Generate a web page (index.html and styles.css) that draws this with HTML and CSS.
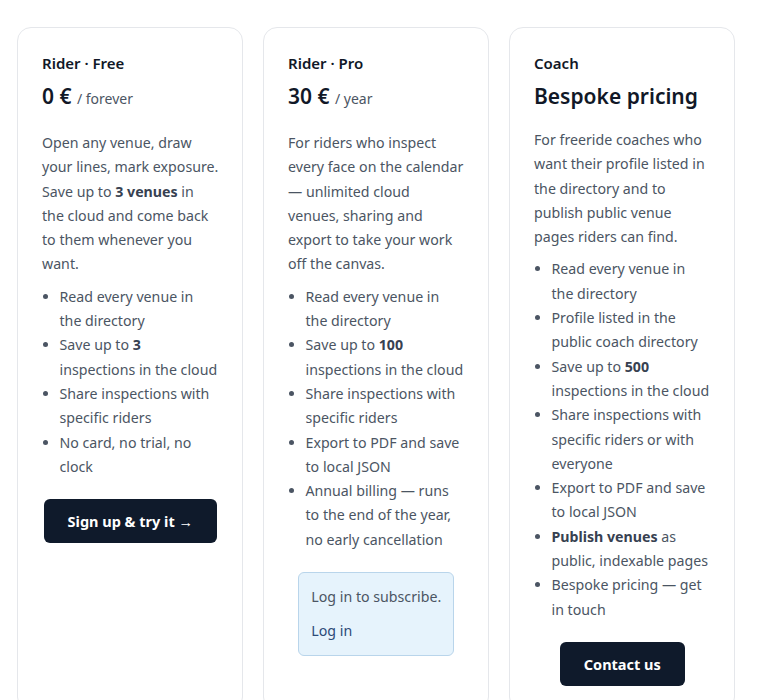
FILE: index.html
```html
<!DOCTYPE html>
<html lang="en">
<head>
  <meta charset="UTF-8" />
  <meta name="viewport" content="width=device-width, initial-scale=1.0" />
  <title>Plans</title>
  <link rel="stylesheet" href="styles.css">
</head>
<body>
  <div class="plans">
    <!-- Free tier -->
    <section class="plan">
      <h3 class="plan-name">Rider · Free</h3>
      <p class="plan-price">0 € <span class="plan-period">/ forever</span></p>
      <p class="plan-desc">
        Open any venue, draw your lines, mark exposure. Save up to <strong>3 venues</strong> in
        the cloud and come back to them whenever you want.
      </p>
      <ul class="plan-features">
        <li>Read every venue in the directory</li>
        <li>Save up to <strong>3</strong> inspections in the cloud</li>
        <li>Share inspections with specific riders</li>
        <li>No card, no trial, no clock</li>
      </ul>
      <div class="plan-action">
        <a class="btn" href="#">Sign up &amp; try it →</a>
      </div>
    </section>

    <!-- Pro tier -->
    <section class="plan">
      <h3 class="plan-name">Rider · Pro</h3>
      <p class="plan-price">30 € <span class="plan-period">/ year</span></p>
      <p class="plan-desc">
        For riders who inspect every face on the calendar — unlimited cloud venues, sharing and
        export to take your work off the canvas.
      </p>
      <ul class="plan-features">
        <li>Read every venue in the directory</li>
        <li>Save up to <strong>100</strong> inspections in the cloud</li>
        <li>Share inspections with specific riders</li>
        <li>Export to PDF and save to local JSON</li>
        <li>Annual billing — runs to the end of the year, no early cancellation</li>
      </ul>
      <div class="plan-action">
        <div class="notice">
          <p>Log in to subscribe.</p>
          <a href="#">Log in</a>
        </div>
      </div>
    </section>

    <!-- Coach tier -->
    <section class="plan">
      <h3 class="plan-name">Coach</h3>
      <p class="plan-price">Bespoke pricing</p>
      <p class="plan-desc">
        For freeride coaches who want their profile listed in the directory and to publish public
        venue pages riders can find.
      </p>
      <ul class="plan-features">
        <li>Read every venue in the directory</li>
        <li>Profile listed in the public coach directory</li>
        <li>Save up to <strong>500</strong> inspections in the cloud</li>
        <li>Share inspections with specific riders or with everyone</li>
        <li>Export to PDF and save to local JSON</li>
        <li><strong>Publish venues</strong> as public, indexable pages</li>
        <li>Bespoke pricing — get in touch</li>
      </ul>
      <div class="plan-action">
        <a class="btn" href="#">Contact us</a>
      </div>
    </section>
  </div>
</body>
</html>
```

FILE: styles.css
```css
:root {
  --ink: #111827;
  --muted: #4b5563;
  --navy: #0f1a2b;
  --line: #e5e7eb;
}
* {
  box-sizing: border-box;
}
body {
  margin: 0;
  font-family: "Noto Sans", "Open Sans", sans-serif;
  background: #fff;
  color: var(--ink);
}
.plans {
  display: grid;
  grid-template-columns: repeat(3, 226px);
  gap: 20px;
  padding: 27px 17px;
}
.plan {
  border: 1px solid var(--line);
  border-radius: 14px;
  padding: 24px 23.45px 24px 24px;
  background: #fff;
}
.plan-name {
  margin: 0;
  font-size: 15px;
  font-weight: 600;
  line-height: 22px;
}
.plan-price {
  margin: 6px 0 0;
  font-size: 21px;
  font-weight: 600;
  line-height: 32px;
}
.plan-period {
  font-size: 14px;
  font-weight: 400;
  color: var(--muted);
}
.plan-desc {
  margin: 16px 0 8px;
  font-size: 14.2px;
  line-height: 24.3px;
  color: var(--muted);
}
.plan-desc strong,
.plan-features strong {
  color: #374151;
}
.plan-features {
  margin: 0;
  padding-left: 17.5px;
  font-size: 14.2px;
  line-height: 24.3px;
  color: var(--muted);
}
/* ---------- ACTIONS ---------- */
.plan-action {
  margin-top: 20px;
  text-align: center;
}
.btn {
  display: inline-block;
  padding: 10px 24px;
  background: var(--navy);
  color: #fff;
  font-size: 14.5px;
  font-weight: 700;
  line-height: 24px;
  border-radius: 6px;
  text-decoration: none;
}
.notice {
  display: inline-block;
  text-align: left;
  padding: 12px;
  background: #e6f3fc;
  border: 1px solid #b9d5eb;
  border-radius: 6px;
  font-size: 14.2px;
  line-height: 24px;
}
.notice p {
  margin: 0 0 10px;
  color: var(--muted);
}
.notice a {
  color: #2c4a78;
  text-decoration: none;
}
```
